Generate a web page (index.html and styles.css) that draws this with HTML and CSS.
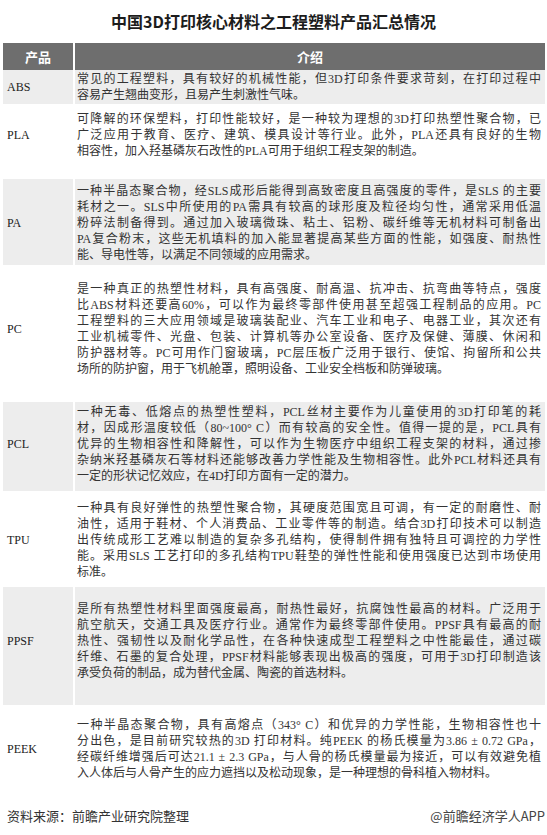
FILE: index.html
```html
<!DOCTYPE html>
<html lang="zh-CN">
<head>
<meta charset="utf-8">
<title>中国3D打印核心材料之工程塑料产品汇总情况</title>
<link rel="stylesheet" href="styles.css">
</head>
<body>
<h1 class="title">中国3D打印核心材料之工程塑料产品汇总情况</h1>
<table class="grid">
  <colgroup><col class="c-name"><col class="c-desc"></colgroup>
  <thead>
    <tr><th class="h-name">产品</th><th class="h-desc">介绍</th></tr>
  </thead>
  <tbody>
    <tr class="shade r-abs">
      <td class="name">ABS</td>
      <td class="desc"><span class="ln">常见的工程塑料，具有较好的机械性能，但3D打印条件要求苛刻，在打印过程中</span><span class="ln end">容易产生翘曲变形，且易产生刺激性气味。</span></td>
    </tr>
    <tr class="r-pla">
      <td class="name">PLA</td>
      <td class="desc"><span class="ln">可降解的环保塑料，打印性能较好，是一种较为理想的3D打印热塑性聚合物，已</span><span class="ln">广泛应用于教育、医疗、建筑、模具设计等行业。此外，PLA还具有良好的生物</span><span class="ln end">相容性，加入羟基磷灰石改性的PLA可用于组织工程支架的制造。</span></td>
    </tr>
    <tr class="shade r-pa">
      <td class="name">PA</td>
      <td class="desc"><span class="ln">一种半晶态聚合物，经SLS成形后能得到高致密度且高强度的零件，是SLS 的主要</span><span class="ln">耗材之一。SLS中所使用的PA需具有较高的球形度及粒径均匀性，通常采用低温</span><span class="ln">粉碎法制备得到。通过加入玻璃微珠、粘土、铝粉、碳纤维等无机材料可制备出</span><span class="ln">PA复合粉末，这些无机填料的加入能显著提高某些方面的性能，如强度、耐热性</span><span class="ln end">能、导电性等，以满足不同领域的应用需求。</span></td>
    </tr>
    <tr class="r-pc">
      <td class="name">PC</td>
      <td class="desc"><span class="ln">是一种真正的热塑性材料，具有高强度、耐高温、抗冲击、抗弯曲等特点，强度</span><span class="ln">比ABS材料还要高60%，可以作为最终零部件使用甚至超强工程制品的应用。PC</span><span class="ln">工程塑料的三大应用领域是玻璃装配业、汽车工业和电子、电器工业，其次还有</span><span class="ln">工业机械零件、光盘、包装、计算机等办公室设备、医疗及保健、薄膜、休闲和</span><span class="ln">防护器材等。PC可用作门窗玻璃，PC层压板广泛用于银行、使馆、拘留所和公共</span><span class="ln end">场所的防护窗，用于飞机舱罩，照明设备、工业安全档板和防弹玻璃。</span></td>
    </tr>
    <tr class="shade r-pcl">
      <td class="name">PCL</td>
      <td class="desc"><span class="ln">一种无毒、低熔点的热塑性塑料，PCL丝材主要作为儿童使用的3D打印笔的耗</span><span class="ln">材，因成形温度较低（80~100° C）而有较高的安全性。值得一提的是，PCL具有</span><span class="ln">优异的生物相容性和降解性，可以作为生物医疗中组织工程支架的材料，通过掺</span><span class="ln">杂纳米羟基磷灰石等材料还能够改善力学性能及生物相容性。此外PCL材料还具有</span><span class="ln end">一定的形状记忆效应，在4D打印方面有一定的潜力。</span></td>
    </tr>
    <tr class="r-tpu">
      <td class="name">TPU</td>
      <td class="desc"><span class="ln">一种具有良好弹性的热塑性聚合物，其硬度范围宽且可调，有一定的耐磨性、耐</span><span class="ln">油性，适用于鞋材、个人消费品、工业零件等的制造。结合3D打印技术可以制造</span><span class="ln">出传统成形工艺难以制造的复杂多孔结构，使得制件拥有独特且可调控的力学性</span><span class="ln">能。采用SLS 工艺打印的多孔结构TPU鞋垫的弹性性能和使用强度已达到市场使用</span><span class="ln end">标准。</span></td>
    </tr>
    <tr class="shade r-ppsf">
      <td class="name">PPSF</td>
      <td class="desc"><span class="ln">是所有热塑性材料里面强度最高，耐热性最好，抗腐蚀性最高的材料。广泛用于</span><span class="ln">航空航天，交通工具及医疗行业。通常作为最终零部件使用。PPSF具有最高的耐</span><span class="ln">热性、强韧性以及耐化学品性，在各种快速成型工程塑料之中性能最佳，通过碳</span><span class="ln">纤维、石墨的复合处理，PPSF材料能够表现出极高的强度，可用于3D打印制造该</span><span class="ln end">承受负荷的制品，成为替代金属、陶瓷的首选材料。</span></td>
    </tr>
    <tr class="r-peek">
      <td class="name">PEEK</td>
      <td class="desc"><span class="ln">一种半晶态聚合物，具有高熔点（343° C）和优异的力学性能，生物相容性也十</span><span class="ln">分出色，是目前研究较热的3D 打印材料。纯PEEK 的杨氏模量为3.86 ± 0.72 GPa，</span><span class="ln">经碳纤维增强后可达21.1 ± 2.3 GPa，与人骨的杨氏模量最为接近，可以有效避免植</span><span class="ln end">入人体后与人骨产生的应力遮挡以及松动现象，是一种理想的骨科植入物材料。</span></td>
    </tr>
  </tbody>
</table>
<footer class="source">
  <span class="src-left">资料来源：前瞻产业研究院整理</span>
  <span class="src-right">@前瞻经济学人APP</span>
</footer>
</body>
</html>
```

FILE: styles.css
```css
html, body {
  margin: 0;
  padding: 0;
  background: #ffffff;
}

body {
  width: 547px;
  height: 835px;
  overflow: hidden;
  font-family: "Liberation Serif", "Noto Sans CJK SC", serif;
  color: #333333;
}

.title {
  margin: 0;
  height: 43px;
  line-height: 43px;
  text-align: center;
  font-family: "Noto Sans CJK SC", sans-serif;
  font-size: 16px;
  font-weight: bold;
  color: #1c1c1c;
}

.grid {
  margin-left: 3px;
  width: 542px;
  border-collapse: collapse;
  table-layout: fixed;
}

.c-name {
  width: 71px;
}

.grid th {
  height: 27px;
  padding: 0;
  background: #6e6e6e;
  color: #ffffff;
  font-family: "Noto Sans CJK SC", sans-serif;
  font-size: 13px;
  font-weight: bold;
  text-align: center;
  vertical-align: middle;
}

.grid .h-desc {
  border-left: 2px solid #ffffff;
}

.grid td {
  font-size: 12px;
  background: #ffffff;
}

.grid .shade td {
  background: #ededed;
}

.name {
  padding: 0 0 0 4px;
  vertical-align: middle;
  line-height: 16px;
  color: #222222;
}

.desc {
  border-left: 2px solid #ffffff;
  padding: 0 4px 0 2px;
  line-height: 16px;
  vertical-align: top;
  color: #333333;
}

.ln {
  display: block;
  white-space: nowrap;
  text-align: justify;
  text-align-last: justify;
}

.ln.end {
  text-align-last: left;
}

.r-abs td { padding-top: 1px; padding-bottom: 1px; }
.r-pla td { padding-top: 7px; padding-bottom: 20px; }
.r-pa td { padding-top: 4px; padding-bottom: 2px; }
.r-pc td { padding-top: 16px; padding-bottom: 25px; }
.r-pcl td { padding-top: 2px; padding-bottom: 7px; }
.r-tpu td { padding-top: 9px; padding-bottom: 7px; }
.r-ppsf td { padding-top: 14px; padding-bottom: 24px; }
.r-peek td { padding-top: 12px; padding-bottom: 12px; }

.source {
  display: flex;
  justify-content: space-between;
  align-items: center;
  margin-top: 14px;
  padding: 0 2px 0 7px;
  font-family: "Noto Sans CJK SC", sans-serif;
  font-size: 13px;
  line-height: 18px;
  color: #333333;
}

.src-right {
  color: #444444;
}
```
